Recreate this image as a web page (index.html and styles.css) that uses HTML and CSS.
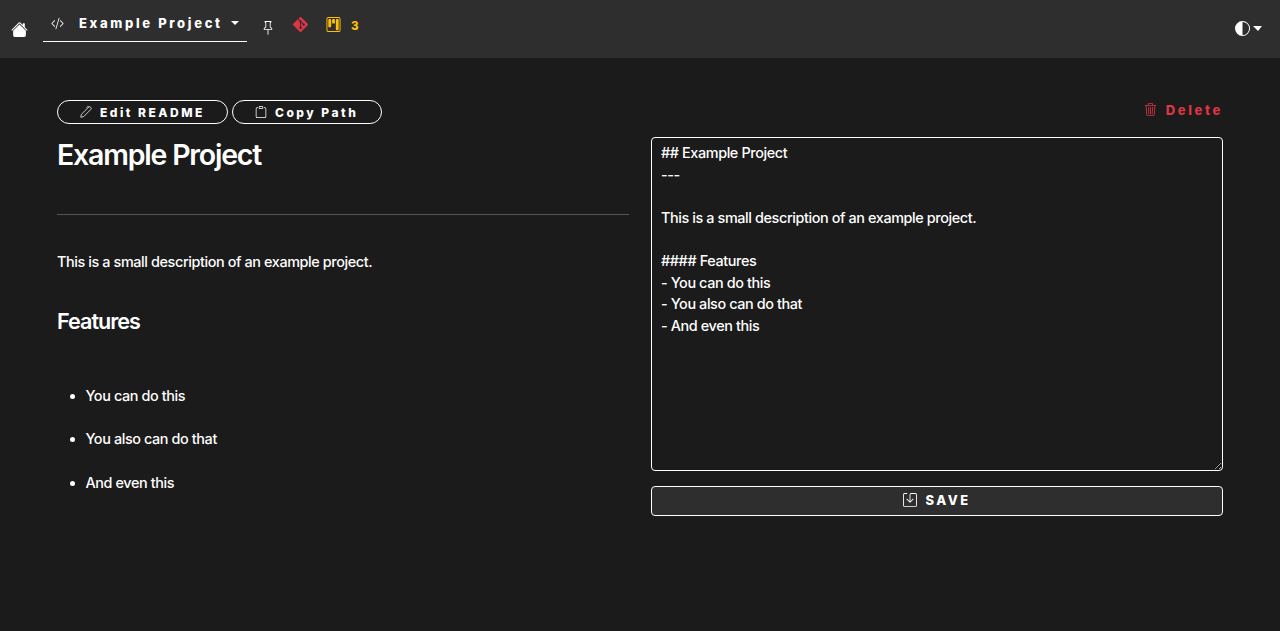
FILE: index.html
```html
<!DOCTYPE html>
<html lang="en">
<head>
<meta charset="utf-8">
<title>Example Project</title>
<link rel="stylesheet" href="styles.css">
</head>
<body>
<nav class="navbar">
  <a class="home"><svg class="icon-home" viewBox="0 0 16 16"><path d="M8.707 1.5a1 1 0 0 0-1.414 0L.646 8.146a.5.5 0 0 0 .708.708L8 2.207l6.646 6.647a.5.5 0 0 0 .708-.708L13 5.793V2.5a.5.5 0 0 0-.5-.5h-1a.5.5 0 0 0-.5.5v1.293z"/><path d="m8 3.293 6 6V13.5a1.5 1.5 0 0 1-1.5 1.5h-9A1.5 1.5 0 0 1 2 13.5V9.293z"/></svg></a>
  <a class="project">
    <svg class="icon-code" viewBox="0 0 16 16"><path d="M10.478 1.647a.5.5 0 1 0-.956-.294l-4 13a.5.5 0 0 0 .956.294zM4.854 4.146a.5.5 0 0 1 0 .708L1.707 8l3.147 3.146a.5.5 0 0 1-.708.708l-3.5-3.5a.5.5 0 0 1 0-.708l3.5-3.5a.5.5 0 0 1 .708 0m6.292 0a.5.5 0 0 0 0 .708L14.293 8l-3.147 3.146a.5.5 0 0 0 .708.708l3.5-3.5a.5.5 0 0 0 0-.708l-3.5-3.5a.5.5 0 0 0-.708 0"/></svg>
    <span class="project-name">Example Project</span>
    <i class="caret"></i>
  </a>
  <svg class="icon-pin" viewBox="0 0 16 16"><path d="M4.146.146A.5.5 0 0 1 4.5 0h7a.5.5 0 0 1 .5.5c0 .68-.342 1.174-.646 1.479-.126.125-.25.224-.354.298v4.431l.078.048c.203.127.476.314.751.555C12.36 7.775 13 8.527 13 9.5a.5.5 0 0 1-.5.5h-4v4.5c0 .276-.224 1.5-.5 1.5s-.5-1.224-.5-1.5V10h-4a.5.5 0 0 1-.5-.5c0-.973.64-1.725 1.17-2.189A6 6 0 0 1 5 6.708V2.277a3 3 0 0 1-.354-.298C4.342 1.674 4 1.179 4 .5a.5.5 0 0 1 .146-.354m1.58 1.408-.002-.001zm-.002-.001.002.001A.5.5 0 0 1 6 2v5a.5.5 0 0 1-.276.447h-.002l-.012.007-.054.03a5 5 0 0 0-.827.58c-.318.278-.585.596-.725.936h7.792c-.14-.34-.407-.658-.725-.936a5 5 0 0 0-.881-.61l-.012-.006h-.002A.5.5 0 0 1 10 7V2a.5.5 0 0 1 .295-.458 1.8 1.8 0 0 0 .351-.271c.08-.08.155-.17.214-.271H5.14q.091.15.214.271a1.8 1.8 0 0 0 .37.282"/></svg>
  <svg class="icon-git" viewBox="0 0 16 16"><path d="M15.698 7.287 8.712.302a1.03 1.03 0 0 0-1.457 0l-1.45 1.45 1.84 1.84a1.223 1.223 0 0 1 1.55 1.56l1.773 1.774a1.224 1.224 0 0 1 1.267 2.025 1.226 1.226 0 0 1-2.002-1.334L8.58 5.963v4.353a1.226 1.226 0 1 1-1.008-.036V5.887a1.226 1.226 0 0 1-.666-1.608L5.093 2.465l-4.79 4.79a1.03 1.03 0 0 0 0 1.457l6.986 6.986a1.03 1.03 0 0 0 1.457 0l6.953-6.953a1.031 1.031 0 0 0 0-1.457"/></svg>
  <svg class="icon-kanban" viewBox="0 0 16 16"><path d="M13.5 1a1 1 0 0 1 1 1v12a1 1 0 0 1-1 1h-11a1 1 0 0 1-1-1V2a1 1 0 0 1 1-1zm-11-1a2 2 0 0 0-2 2v12a2 2 0 0 0 2 2h11a2 2 0 0 0 2-2V2a2 2 0 0 0-2-2z"/><path d="M6.5 3a1 1 0 0 1 1-1h1a1 1 0 0 1 1 1v3a1 1 0 0 1-1 1h-1a1 1 0 0 1-1-1zm-4 0a1 1 0 0 1 1-1h1a1 1 0 0 1 1 1v7a1 1 0 0 1-1 1h-1a1 1 0 0 1-1-1zm8 0a1 1 0 0 1 1-1h1a1 1 0 0 1 1 1v10a1 1 0 0 1-1 1h-1a1 1 0 0 1-1-1z"/></svg>
  <span class="count">3</span>
  <a class="theme"><svg class="icon-theme" viewBox="0 0 16 16"><path d="M8 15A7 7 0 1 0 8 1zm0 1A8 8 0 1 1 8 0a8 8 0 0 1 0 16"/></svg><i class="caret caret-large"></i></a>
</nav>
<main class="content">
  <div class="toolbar">
    <button class="pill pill-edit"><svg class="icon-small" viewBox="0 0 16 16"><path class="outline" d="M1 15l.9-4L11.3 1.7a2.1 2.1 0 0 1 3 3L5 14zM8.500 2.500 10.300 .8 12 1.500"/></svg><span>Edit README</span></button>
    <button class="pill pill-copy"><svg class="icon-small" viewBox="0 0 16 16"><path d="M4 1.5H3a2 2 0 0 0-2 2V14a2 2 0 0 0 2 2h10a2 2 0 0 0 2-2V3.500a2 2 0 0 0-2-2h-1v1h1a1 1 0 0 1 1 1V14a1 1 0 0 1-1 1H3a1 1 0 0 1-1-1V3.500a1 1 0 0 1 1-1h1z"/><path d="M9.500 1a.5.5 0 0 1 .5.5v1a.5.5 0 0 1-.5.5h-3a.5.5 0 0 1-.5-.5v-1a.5.5 0 0 1 .5-.5zm-3-1A1.500 1.500 0 0 0 5 1.500v1A1.500 1.500 0 0 0 6.500 4h3A1.500 1.500 0 0 0 11 2.500v-1A1.500 1.500 0 0 0 9.500 0z"/></svg><span>Copy Path</span></button>
    <a class="delete"><svg class="icon-trash" viewBox="0 0 16 16"><path d="M6.500 1h3a.5.5 0 0 1 .5.5v1H6v-1a.5.5 0 0 1 .5-.5M11 2.500v-1A1.500 1.500 0 0 0 9.500 0h-3A1.500 1.500 0 0 0 5 1.500v1H1.500a.5.5 0 0 0 0 1h.538l.853 10.660A2 2 0 0 0 4.885 16h6.230a2 2 0 0 0 1.994-1.840l.853-10.660h.538a.5.5 0 0 0 0-1zm1.958 1-.846 10.580a1 1 0 0 1-.997.920h-6.230a1 1 0 0 1-.997-.920L3.042 3.500zm-7.487 1a.5.5 0 0 1 .528.470l.5 8.500a.5.5 0 0 1-.998.060L5 5.030a.5.5 0 0 1 .471-.530m5.058 0a.5.5 0 0 1 .470.530l-.5 8.500a.5.5 0 1 1-.998-.060l.5-8.500a.5.5 0 0 1 .528-.470M8 4.500a.5.5 0 0 1 .5.5v8.500a.5.5 0 0 1-1 0V5a.5.5 0 0 1 .5-.5"/></svg><span>Delete</span></a>
  </div>
  <div class="columns">
    <article class="preview">
      <h2>Example Project</h2>
      <hr>
      <p>This is a small description of an example project.</p>
      <h4>Features</h4>
      <ul>
        <li>You can do this</li>
        <li>You also can do that</li>
        <li>And even this</li>
      </ul>
    </article>
    <form class="editor">
      <textarea spellcheck="false">## Example Project
---

This is a small description of an example project.

#### Features
- You can do this
- You also can do that
- And even this</textarea>
      <button class="save" type="button"><svg class="icon-save" viewBox="0 0 16 16"><path d="M2 1a1 1 0 0 0-1 1v12a1 1 0 0 0 1 1h12a1 1 0 0 0 1-1V2a1 1 0 0 0-1-1H9.500a1 1 0 0 0-1 1v7.293l2.646-2.647a.5.5 0 0 1 .708.708l-3.500 3.500a.5.5 0 0 1-.708 0l-3.500-3.500a.5.5 0 1 1 .708-.708L7.500 9.293V2a2 2 0 0 1 2-2H14a2 2 0 0 1 2 2v12a2 2 0 0 1-2 2H2a2 2 0 0 1-2-2V2a2 2 0 0 1 2-2h2.500a.5.5 0 0 1 0 1z"/></svg><span>SAVE</span></button>
    </form>
  </div>
</main>
</body>
</html>
```

FILE: styles.css
```css
* { box-sizing: border-box; }
body {
  margin: 0;
  min-height: 631px;
  background: #1b1b1b;
  color: #fff;
  font: 480 14.4px/21.6px Inter, sans-serif;
}
svg { display: block; flex: none; fill: currentColor; }
.outline { fill: none; stroke: currentColor; stroke-width: 1; }

.navbar {
  height: 58px;
  padding: 0 18px 0 11px;
  background: #2e2e2e;
  display: flex;
  align-items: flex-start;
}
.icon-home { width: 17px; height: 17px; margin-top: 20.5px; }
.project {
  width: 204px;
  height: 42px;
  margin-left: 15px;
  padding: 13px 0 0 7.5px;
  border-bottom: 1px solid #fff;
  display: flex;
}
.icon-code { width: 13px; height: 13px; margin-top: 4px; }
.project-name {
  width: 145px;
  margin-left: 15.5px;
  font-size: 13px;
  font-weight: 800;
  letter-spacing: 2.66px;
  white-space: nowrap;
}
.caret {
  width: 0;
  height: 0;
  margin: 8px 0 0 7px;
  border: 4px solid transparent;
  border-top-color: #fff;
  border-bottom: 0;
}
.icon-pin { width: 14px; height: 14px; margin: 21px 0 0 14px; }
.icon-git { width: 15px; height: 15px; margin: 17px 0 0 18px; color: #dc3545; }
.icon-kanban { width: 15px; height: 15px; margin: 17px 0 0 17.5px; color: #ffc107; }
.count { margin: 16px 0 0 10.5px; font-size: 11.5px; font-weight: 800; color: #ffc107; }
.theme { display: flex; margin: 21px 0 0 auto; }
.icon-theme { width: 15px; height: 15px; }
.caret-large { margin: 5px 0 0 3px; border-width: 5px 4.5px 0; }
.theme .caret { border-left-width: 5px; border-right-width: 4.5px; }

.content { padding: 42px 57px 0; }
.toolbar { height: 37px; display: flex; gap: 4px; }
.pill {
  height: 24px;
  padding: 0;
  border: 1px solid #fff;
  border-radius: 12px;
  background: none;
  color: #fff;
  display: flex;
  align-items: center;
  font: 800 12px/22px Inter, sans-serif;
  letter-spacing: 2.5px;
  white-space: nowrap;
}
.pill-edit { width: 171px; padding-left: 22px; }
.pill-copy { width: 150px; padding-left: 22px; }
.pill span { margin: 2px 0 0 8px; }
.icon-small { width: 12px; height: 12px; }
.delete {
  margin-left: auto;
  display: flex;
  color: #dc3545;
  font-size: 13px;
  font-weight: 800;
  letter-spacing: 2.65px;
}
.icon-trash { width: 13px; height: 13px; margin: 3px 8.5px 0 0; }

.columns { display: grid; grid-template-columns: 572px 572px; gap: 22px; }
.preview h2 { margin: 0; font-size: 28.5px; line-height: 36px; font-weight: 600; letter-spacing: -1.2px; }
.preview hr { margin: 41px 0 36px; border: 0; border-top: 1px solid #555; }
.preview p { margin: 0; letter-spacing: -.39px; }
.preview h4 { margin: 34px 0 0; font-size: 21.6px; line-height: 28px; font-weight: 600; letter-spacing: -1px; }
.preview ul { margin: 50px 0 0; padding: 0 0 0 28.5px; }
.preview li { margin-bottom: 21.9px; letter-spacing: -.39px; }

.editor { display: flex; flex-direction: column; }
textarea {
  width: 572px;
  height: 334px;
  padding: 4px 9px;
  border: 1px solid #fff;
  border-radius: 4px;
  background: #1b1b1b;
  color: #fff;
  font: 480 14.4px/21.6px Inter, sans-serif;
  letter-spacing: -.39px;
  resize: vertical;
}
.save {
  height: 30px;
  margin-top: 15px;
  padding: 0 0 2px;
  border: 1px solid #fff;
  border-radius: 4px;
  background: #2e2e2e;
  color: #fff;
  display: flex;
  align-items: center;
  justify-content: center;
  gap: 8px;
  font: 800 13px/20px Inter, sans-serif;
  letter-spacing: 2.5px;
}
.icon-save { width: 14px; height: 14px; }
```
